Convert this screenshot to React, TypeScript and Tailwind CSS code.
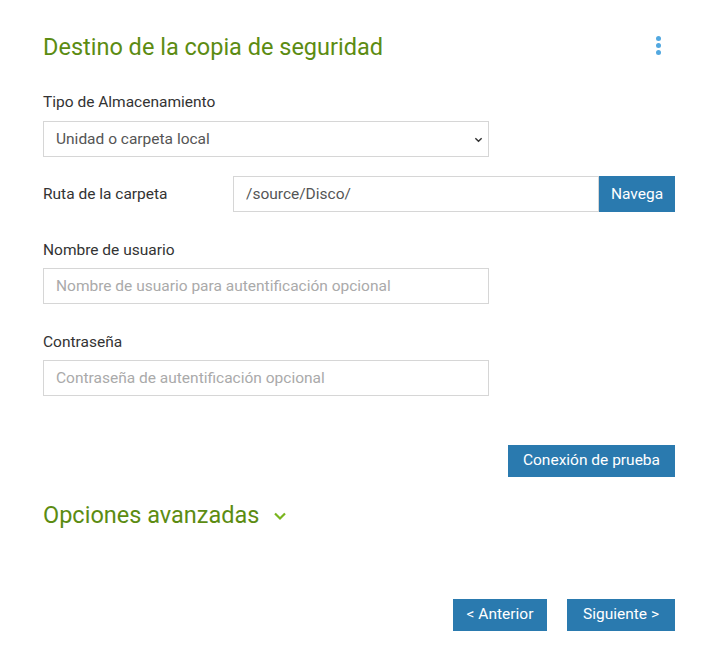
import React from 'react';

const FONT = "font-['Roboto','Liberation_Sans',sans-serif]";
const INPUT = 'h-9 w-full border border-[#d6d6d6] bg-white px-3 text-[15.5px] text-[#555] placeholder:text-[#aaa] outline-none';
const BTN = 'bg-[#2a7aaf] text-white text-[15.5px]';

const Label: React.FC<{ children: React.ReactNode }> = ({ children }) => (
  <label className="block text-[15.5px] text-[#333]">{children}</label>
);

export default function App() {
  return (
    <div className={`${FONT} w-[705px] h-[646px] bg-white pl-[43px] pr-[30px] pt-[32px]`}>
      <div className="flex items-start justify-between pr-[14px]">
        <h1 className="text-[23.5px] leading-[30px] text-[#5c8c12]">Destino de la copia de seguridad</h1>
        <div className="flex flex-col gap-[2px] pt-[4px]">
          <span className="w-[5px] h-[5px] rounded-full bg-[#52a8e0]" />
          <span className="w-[5px] h-[5px] rounded-full bg-[#52a8e0]" />
          <span className="w-[5px] h-[5px] rounded-full bg-[#52a8e0]" />
        </div>
      </div>

      <div className="mt-[29px] w-[446px]">
        <Label>Tipo de Almacenamiento</Label>
        <div className="relative mt-[7px]">
          <select className={`${INPUT} appearance-none`} defaultValue="local">
            <option value="local">Unidad o carpeta local</option>
          </select>
          <svg className="absolute right-[6px] top-[14px] w-[9px] h-[9px]" viewBox="0 0 10 10" fill="none" stroke="#333" strokeWidth="1.6">
            <path d="M1.5 3.5 L5 7 L8.5 3.5" />
          </svg>
        </div>
      </div>

      <div className="mt-[19px] flex items-center">
        <div className="w-[190px] text-[15.5px] text-[#333]">Ruta de la carpeta</div>
        <div className="flex flex-1">
          <input className={`${INPUT} flex-1`} defaultValue="/source/Disco/" />
          <button className={`${BTN} h-9 w-[76px]`}>Navega</button>
        </div>
      </div>

      <div className="mt-[27px] w-[446px]">
        <Label>Nombre de usuario</Label>
        <input className={`${INPUT} mt-[5px]`} placeholder="Nombre de usuario para autentificación opcional" />
      </div>

      <div className="mt-[27px] w-[446px]">
        <Label>Contraseña</Label>
        <input className={`${INPUT} mt-[6px]`} type="password" placeholder="Contraseña de autentificación opcional" />
      </div>

      <div className="mt-[49px] flex justify-end">
        <button className={`${BTN} h-8 px-[15px]`}>Conexión de prueba</button>
      </div>

      <div className="mt-[23px] flex items-center gap-[14px] text-[#5c8c12]">
        <span className="text-[23.5px] leading-[30px]">Opciones avanzadas</span>
        <svg className="w-[14px] h-[14px] mt-[2px]" viewBox="0 0 14 14" fill="none" stroke="#7ab51d" strokeWidth="2.2">
          <path d="M2 4.5 L7 9.5 L12 4.5" />
        </svg>
      </div>

      <div className="mt-[69px] flex justify-end gap-[20px]">
        <button className={`${BTN} h-8 w-[94px]`}>&lt; Anterior</button>
        <button className={`${BTN} h-8 w-[108px]`}>Siguiente &gt;</button>
      </div>
    </div>
  );
}
